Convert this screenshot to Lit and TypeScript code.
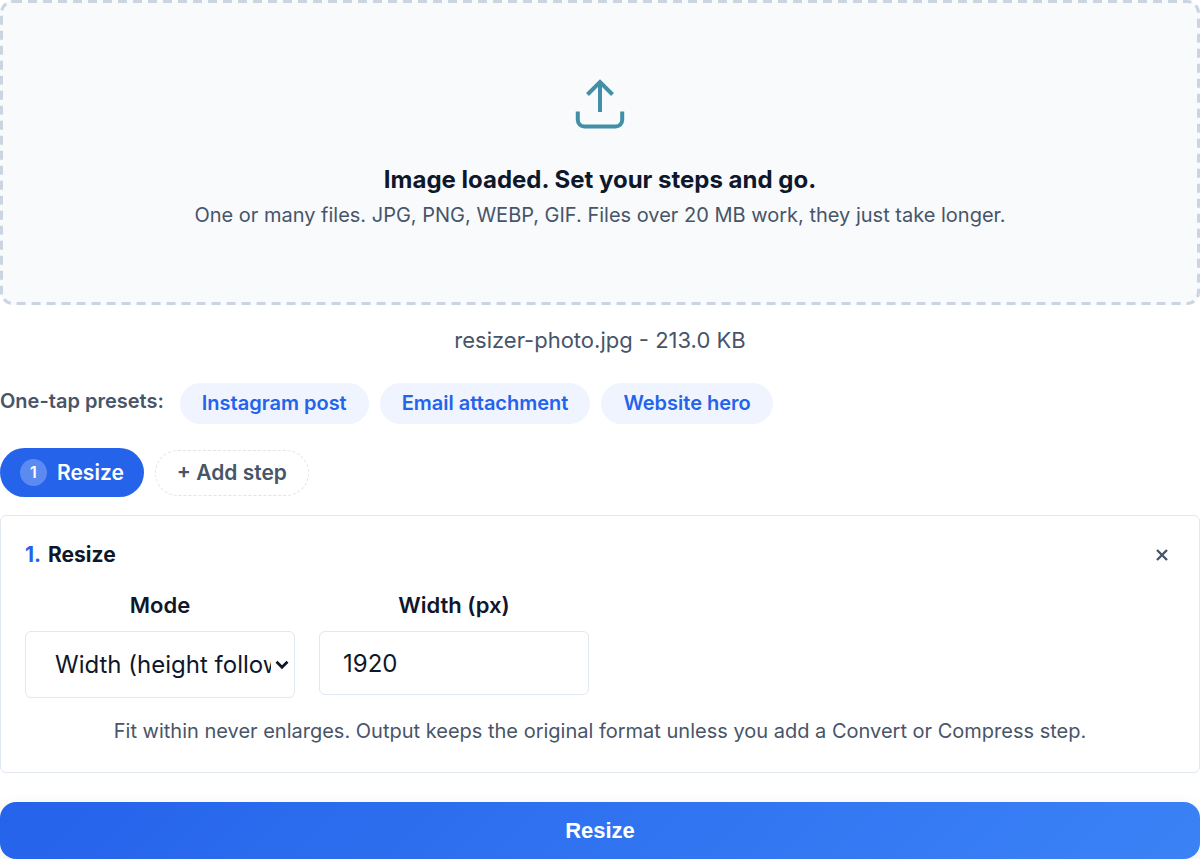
import { LitElement, html, css } from "lit";
import { customElement, state } from "lit/decorators.js";

@customElement("app-root")
export class AppRoot extends LitElement {
  @state() private presets = ["Instagram post", "Email attachment", "Website hero"];

  static styles = css`
    :host {
      display: block;
      background: #fff;
      color: #0f172a;
      font-family: Inter, "Open Sans", sans-serif;
      font-size: 20px;
      line-height: 28px;
    }
    * { box-sizing: border-box; }
    button, input, select { font: inherit; color: inherit; margin: 0; }
    button { cursor: pointer; border: 0; }
    p, h2, h3 { margin: 0; }
    .drop {
      position: relative;
      display: flex;
      flex-direction: column;
      align-items: center;
      padding: 71px 24px 73px;
      border-radius: 13px;
      overflow: hidden;
      background: #f8fafc;
      text-align: center;
    }
    .dashes { position: absolute; inset: 0; width: 100%; height: 100%; pointer-events: none; }
    .upload { display: block; width: 66px; height: 66px; margin-bottom: 25px; }
    .title { font-size: 24px; line-height: 36px; font-weight: 700; }
    .sub { line-height: 34px; color: #475569; }
    .file {
      padding: 20px 0 28px;
      font-size: 22px;
      line-height: 30px;
      text-align: center;
      color: #475569;
    }
    .row { display: flex; flex-wrap: wrap; align-items: center; gap: 11px; }
    .presets { align-items: flex-start; }
    .label { margin-right: 5px; font-weight: 600; color: #475569; line-height: 36px; }
    .chip {
      padding: 6px 22px 7px;
      border-radius: 24px;
      background: #eff4ff;
      color: #2563eb;
      font-weight: 600;
    }
    .steps { margin-top: 24px; }
    .step {
      display: flex;
      align-items: center;
      gap: 10px;
      padding: 10px 20px;
      border-radius: 28px;
      background: #2563eb;
      color: #fff;
      font-size: 21px;
      font-weight: 600;
      line-height: 29px;
    }
    .num {
      width: 27px;
      height: 27px;
      border-radius: 50%;
      background: rgba(255, 255, 255, 0.25);
      font-size: 16px;
      line-height: 27px;
    }
    .add {
      padding: 8px 21px;
      border: 1px dashed #dfe4ec;
      border-radius: 24px;
      background: #fff;
      color: #475569;
      font-size: 21px;
      font-weight: 600;
    }
    .card {
      margin-top: 18px;
      padding: 24px 24px 26px;
      border: 1px solid #e2e8f0;
      border-radius: 6px;
    }
    .head { display: flex; justify-content: space-between; align-items: center; }
    .name { font-size: 21px; line-height: 30px; font-weight: 700; }
    .idx { margin-right: 2px; color: #2563eb; }
    .close { display: flex; padding: 7px; background: none; color: #475569; }
    .x { width: 12px; height: 12px; }
    .fields { display: flex; flex-wrap: wrap; align-items: flex-start; gap: 24px; margin-top: 21px; }
    .field { display: flex; flex-direction: column; gap: 12px; flex: 0 1 270px; min-width: 0; }
    .cap { text-align: center; font-size: 22px; font-weight: 600; }
    .selwrap { display: grid; align-items: center; }
    .select, .input {
      width: 100%;
      border: 1px solid #e2e8f0;
      border-radius: 6px;
      background: #fff;
      font-size: 24px;
      line-height: 30px;
    }
    .select { grid-area: 1 / 1; height: 67px; padding: 0 23px 0 29px; appearance: none; }
    .arrow { grid-area: 1 / 1; justify-self: end; width: 14px; height: 10px; margin-right: 6px; pointer-events: none; }
    .input { height: 64px; padding: 0 23px; }
    .hint { margin-top: 18px; text-align: center; color: #475569; line-height: 30px; }
    .go {
      display: block;
      width: 100%;
      margin-top: 29px;
      padding: 14px 24px 13px;
      border-radius: 16px;
      background: linear-gradient(135deg, #2563eb, #3b82f6);
      box-shadow: 0 4px 16px rgba(15, 23, 42, 0.08);
      color: #fff;
      font-family: "Liberation Sans", sans-serif;
      font-size: 22px;
      line-height: 30px;
      font-weight: 700;
    }
  `;

  render() {
    return html`
      <section class="drop">
        <svg class="dashes" aria-hidden="true">
          <rect width="100%" height="100%" rx="13" fill="none" stroke="#cbd5e1" stroke-width="6" stroke-dasharray="9 6" />
        </svg>
        <svg class="upload" viewBox="0 0 66 66" fill="none" stroke="#4190a6" stroke-width="4" aria-hidden="true">
          <path d="M10.8 40.5v8.5a6.5 6.5 0 0 0 6.5 6.5h31.4a6.5 6.5 0 0 0 6.5-6.5v-8.5M33 41V11.5M20.5 23.5 33 11l12.5 12.5" />
        </svg>
        <h2 class="title">Image loaded. Set your steps and go.</h2>
        <p class="sub">One or many files. JPG, PNG, WEBP, GIF. Files over 20 MB work, they just take longer.</p>
      </section>
      <p class="file">resizer-photo.jpg - 213.0 KB</p>
      <div class="row presets">
        <span class="label">One-tap presets:</span>
        ${this.presets.map((p) => html`<button class="chip" type="button">${p}</button>`)}
      </div>
      <div class="row steps">
        <button class="step" type="button"><span class="num">1</span><span>Resize</span></button>
        <button class="add" type="button">+ Add step</button>
      </div>
      <section class="card">
        <div class="head">
          <h3 class="name"><span class="idx">1.</span> Resize</h3>
          <button class="close" type="button" aria-label="Remove step">
            <svg class="x" viewBox="0 0 12 12" stroke="currentColor" stroke-width="2.4" fill="none"><path d="M1 1l10 10M11 1L1 11" /></svg>
          </button>
        </div>
        <div class="fields">
          <div class="field">
            <label class="cap" for="mode">Mode</label>
            <div class="selwrap">
              <select class="select" id="mode">
                <option>Width (height follows)</option>
              </select>
              <svg class="arrow" viewBox="0 0 14 10" stroke="#0f172a" stroke-width="2.8" fill="none" aria-hidden="true"><path d="M1.5 1.8 7 7.3l5.5-5.5" /></svg>
            </div>
          </div>
          <div class="field">
            <label class="cap" for="width">Width (px)</label>
            <input class="input" id="width" type="text" inputmode="numeric" value="1920" />
          </div>
        </div>
        <p class="hint">Fit within never enlarges. Output keeps the original format unless you add a Convert or Compress step.</p>
      </section>
      <button class="go" type="button">Resize</button>
    `;
  }
}
